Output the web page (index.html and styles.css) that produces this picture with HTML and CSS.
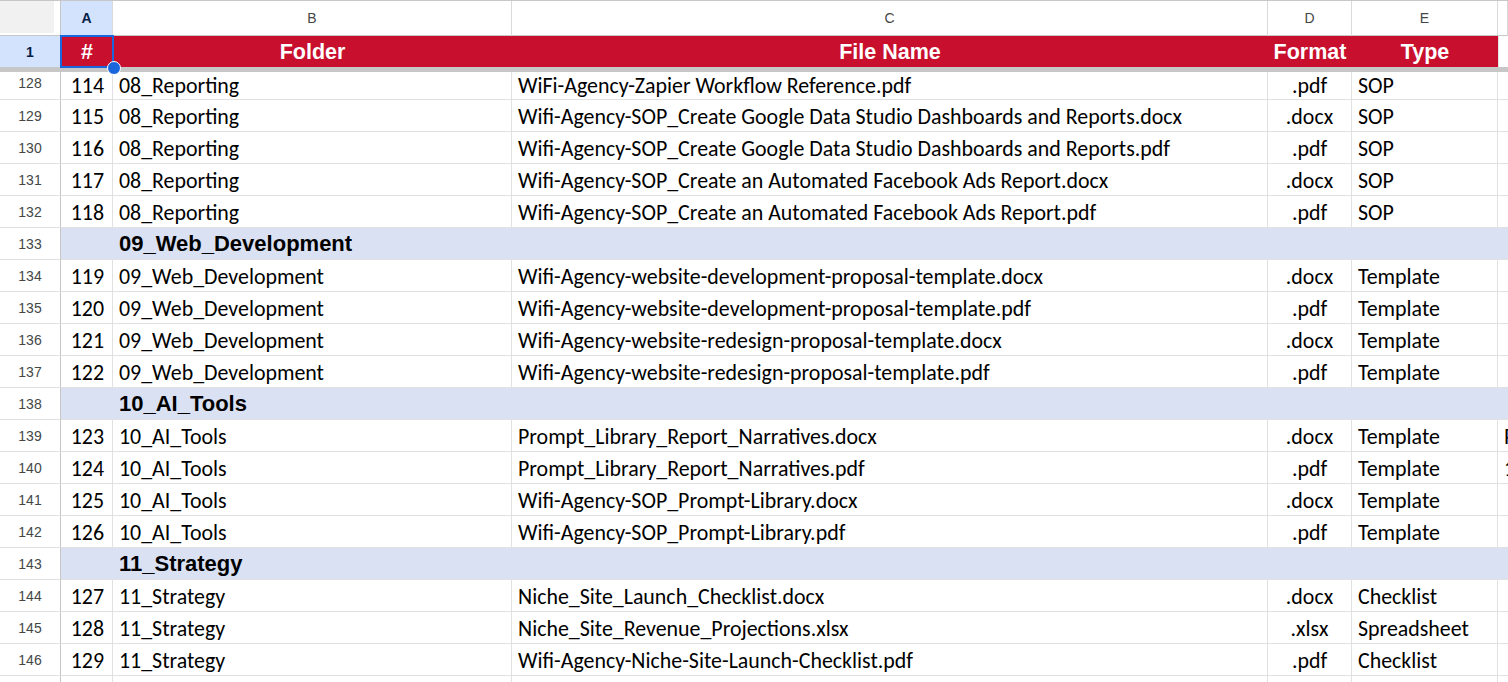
FILE: index.html
```html
<!DOCTYPE html>
<html>
<head>
<meta charset="utf-8">
<link rel="stylesheet" href="styles.css">
</head>
<body>
<div class="sheet">
  <div class="row colhead">
    <div class="corner"><div class="corner-inner"></div></div>
    <div class="ch sel">A</div>
    <div class="ch">B</div>
    <div class="ch">C</div>
    <div class="ch">D</div>
    <div class="ch">E</div>
    <div class="ch last"></div>
  </div>
  <div class="row hdr">
    <div class="rh sel">1</div>
    <div class="hc active">#<span class="handle"></span></div>
    <div class="hc">Folder</div>
    <div class="hc">File Name</div>
    <div class="hc">Format</div>
    <div class="hc">Type</div>
    <div class="hc blank"></div>
  </div>
  <div class="freeze"></div>
  <div class="row data partial">
    <div class="rh">128</div><div class="c num">114</div><div class="c">08_Reporting</div><div class="c">WiFi-Agency-Zapier Workflow Reference.pdf</div><div class="c mid">.pdf</div><div class="c">SOP</div><div class="c"></div>
  </div>
  <div class="row data">
    <div class="rh">129</div><div class="c num">115</div><div class="c">08_Reporting</div><div class="c">Wifi-Agency-SOP_Create Google Data Studio Dashboards and Reports.docx</div><div class="c mid">.docx</div><div class="c">SOP</div><div class="c"></div>
  </div>
  <div class="row data">
    <div class="rh">130</div><div class="c num">116</div><div class="c">08_Reporting</div><div class="c">Wifi-Agency-SOP_Create Google Data Studio Dashboards and Reports.pdf</div><div class="c mid">.pdf</div><div class="c">SOP</div><div class="c"></div>
  </div>
  <div class="row data">
    <div class="rh">131</div><div class="c num">117</div><div class="c">08_Reporting</div><div class="c">Wifi-Agency-SOP_Create an Automated Facebook Ads Report.docx</div><div class="c mid">.docx</div><div class="c">SOP</div><div class="c"></div>
  </div>
  <div class="row data">
    <div class="rh">132</div><div class="c num">118</div><div class="c">08_Reporting</div><div class="c">Wifi-Agency-SOP_Create an Automated Facebook Ads Report.pdf</div><div class="c mid">.pdf</div><div class="c">SOP</div><div class="c"></div>
  </div>
  <div class="row group">
    <div class="rh">133</div><div class="g">09_Web_Development</div>
  </div>
  <div class="row data">
    <div class="rh">134</div><div class="c num">119</div><div class="c">09_Web_Development</div><div class="c">Wifi-Agency-website-development-proposal-template.docx</div><div class="c mid">.docx</div><div class="c">Template</div><div class="c"></div>
  </div>
  <div class="row data">
    <div class="rh">135</div><div class="c num">120</div><div class="c">09_Web_Development</div><div class="c">Wifi-Agency-website-development-proposal-template.pdf</div><div class="c mid">.pdf</div><div class="c">Template</div><div class="c"></div>
  </div>
  <div class="row data">
    <div class="rh">136</div><div class="c num">121</div><div class="c">09_Web_Development</div><div class="c">Wifi-Agency-website-redesign-proposal-template.docx</div><div class="c mid">.docx</div><div class="c">Template</div><div class="c"></div>
  </div>
  <div class="row data">
    <div class="rh">137</div><div class="c num">122</div><div class="c">09_Web_Development</div><div class="c">Wifi-Agency-website-redesign-proposal-template.pdf</div><div class="c mid">.pdf</div><div class="c">Template</div><div class="c"></div>
  </div>
  <div class="row group">
    <div class="rh">138</div><div class="g">10_AI_Tools</div>
  </div>
  <div class="row data">
    <div class="rh">139</div><div class="c num">123</div><div class="c">10_AI_Tools</div><div class="c">Prompt_Library_Report_Narratives.docx</div><div class="c mid">.docx</div><div class="c">Template</div><div class="c">P</div>
  </div>
  <div class="row data">
    <div class="rh">140</div><div class="c num">124</div><div class="c">10_AI_Tools</div><div class="c">Prompt_Library_Report_Narratives.pdf</div><div class="c mid">.pdf</div><div class="c">Template</div><div class="c">1</div>
  </div>
  <div class="row data">
    <div class="rh">141</div><div class="c num">125</div><div class="c">10_AI_Tools</div><div class="c">Wifi-Agency-SOP_Prompt-Library.docx</div><div class="c mid">.docx</div><div class="c">Template</div><div class="c"></div>
  </div>
  <div class="row data">
    <div class="rh">142</div><div class="c num">126</div><div class="c">10_AI_Tools</div><div class="c">Wifi-Agency-SOP_Prompt-Library.pdf</div><div class="c mid">.pdf</div><div class="c">Template</div><div class="c"></div>
  </div>
  <div class="row group">
    <div class="rh">143</div><div class="g">11_Strategy</div>
  </div>
  <div class="row data">
    <div class="rh">144</div><div class="c num">127</div><div class="c">11_Strategy</div><div class="c">Niche_Site_Launch_Checklist.docx</div><div class="c mid">.docx</div><div class="c">Checklist</div><div class="c"></div>
  </div>
  <div class="row data">
    <div class="rh">145</div><div class="c num">128</div><div class="c">11_Strategy</div><div class="c">Niche_Site_Revenue_Projections.xlsx</div><div class="c mid">.xlsx</div><div class="c">Spreadsheet</div><div class="c"></div>
  </div>
  <div class="row data">
    <div class="rh">146</div><div class="c num">129</div><div class="c">11_Strategy</div><div class="c">Wifi-Agency-Niche-Site-Launch-Checklist.pdf</div><div class="c mid">.pdf</div><div class="c">Checklist</div><div class="c"></div>
  </div>
  <div class="row data">
    <div class="rh"></div><div class="c num"></div><div class="c"></div><div class="c"></div><div class="c mid"></div><div class="c"></div><div class="c"></div>
  </div>
</div>
</body>
</html>
```
FILE: styles.css
```css
html, body {
  margin: 0;
  padding: 0;
  background: #fff;
  overflow: hidden;
}
.sheet {
  width: 1508px;
  height: 682px;
  overflow: hidden;
}
.row {
  display: grid;
  grid-template-columns: 61px 52px 399px 756px 84px 146px 1fr;
  box-sizing: border-box;
}
/* column header row */
.colhead {
  height: 36px;
  border-top: 1px solid #c7c7c7;
}
.corner {
  background: #fff;
  border-right: 1px solid #c7c7c7;
  border-bottom: 1px solid #c7c7c7;
  box-sizing: border-box;
}
.corner-inner {
  width: 54px;
  height: 32px;
  background: #f1f1f1;
}
.ch {
  box-sizing: border-box;
  border-right: 1px solid #dadada;
  border-bottom: 1px solid #c7c7c7;
  display: flex;
  align-items: center;
  justify-content: center;
  font-family: "Liberation Sans", Arial, sans-serif;
  font-size: 14px;
  color: #444746;
}
.ch.sel {
  background: #d3e3fd;
  color: #041e49;
  font-weight: bold;
}
/* header row */
.hdr {
  height: 31px;
}
.rh {
  box-sizing: border-box;
  border-right: 1px solid #c7c7c7;
  border-bottom: 1px solid #e1e1e1;
  display: flex;
  align-items: center;
  justify-content: center;
  font-family: "Liberation Sans", Arial, sans-serif;
  font-size: 14px;
  color: #444746;
  background: #fff;
}
.rh.sel {
  background: #d3e3fd;
  color: #041e49;
  font-weight: bold;
  border-bottom: none;
}
.hc {
  background: #c8102e;
  color: #fff;
  font-family: "Liberation Sans", Arial, sans-serif;
  font-weight: bold;
  font-size: 21.5px;
  display: flex;
  align-items: center;
  justify-content: center;
  padding-top: 1px;
  box-sizing: border-box;
}
.hc.blank {
  background: #fff;
  border-left: 1px solid #e1e1e1;
}
.hc.active {
  position: relative;
  outline: 2px solid #1a66dc;
  outline-offset: -1px;
  z-index: 2;
}
.handle {
  position: absolute;
  right: -8px;
  bottom: -8px;
  width: 12px;
  height: 12px;
  border-radius: 50%;
  background: #1a66dc;
  border: 1.5px solid #fff;
  z-index: 3;
}
.freeze {
  height: 5px;
  background: #c7c7c7;
}
/* data rows */
.data {
  height: 32px;
}
.data.partial {
  height: 28px;
}
.data.partial .c {
  padding-bottom: 0;
}
.data.partial .rh {
  padding-bottom: 6px;
}
.c {
  box-sizing: border-box;
  border-right: 1px solid #e1e1e1;
  border-bottom: 1px solid #e1e1e1;
  display: flex;
  align-items: flex-end;
  padding: 0 6px 1px 6px;
  font-family: Carlito, Calibri, Lato, sans-serif;
  font-size: 21.9px;
  line-height: 26px;
  color: #000;
  white-space: nowrap;
  overflow: hidden;
}
.c.num {
  justify-content: flex-end;
  padding-right: 8px;
}
.c.mid {
  justify-content: center;
}
.group {
  height: 32px;
}
.g {
  grid-column: 2 / -1;
  background: #d9e1f3;
  border-bottom: 1px solid #e1e1e1;
  box-sizing: border-box;
  display: flex;
  align-items: center;
  padding-left: 58px;
  padding-top: 1px;
  font-family: "Liberation Sans", Arial, sans-serif;
  font-weight: bold;
  font-size: 22px;
  color: #000;
}
```
